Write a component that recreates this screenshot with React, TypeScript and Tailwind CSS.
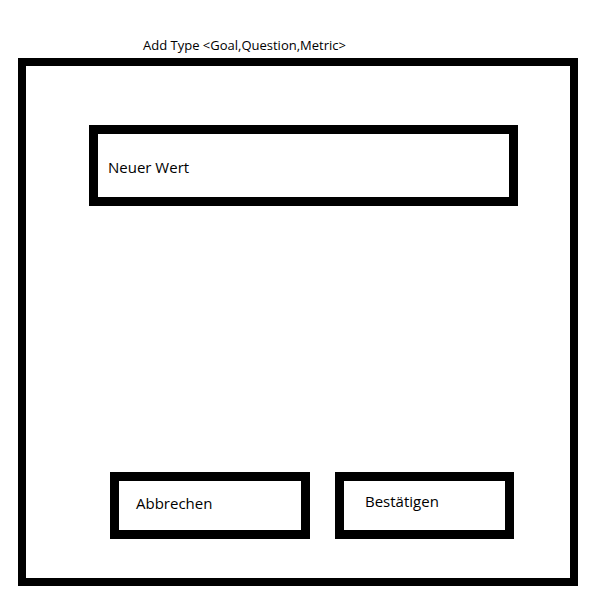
export default function App() {
  return (
    <div className="w-[614px] h-[604px] bg-white text-black font-['Open_Sans',sans-serif]">
      <div className="pl-[143px] pt-[37px] h-[58px] text-[13px] leading-[16px]">
        Add Type &lt;Goal,Question,Metric&gt;
      </div>
      <div className="ml-[18px] w-[560px] h-[528px] border-8 border-black flex flex-col">
        <div className="ml-[63px] mt-[59px] w-[429px] h-[81px] border-[9px] border-black flex items-center pl-[10px] pt-[3px] text-[15px] leading-[20px]">
          Neuer Wert
        </div>
        <div className="ml-[84px] mt-[266px] flex gap-[25px] text-[15px] leading-[20px]">
          <div className="w-[200px] h-[67px] border-[9px] border-black pl-[17px] pt-[12px]">Abbrechen</div>
          <div className="w-[179px] h-[67px] border-[9px] border-black pl-[21px] pt-[10px]">Bestätigen</div>
        </div>
      </div>
    </div>
  );
}
